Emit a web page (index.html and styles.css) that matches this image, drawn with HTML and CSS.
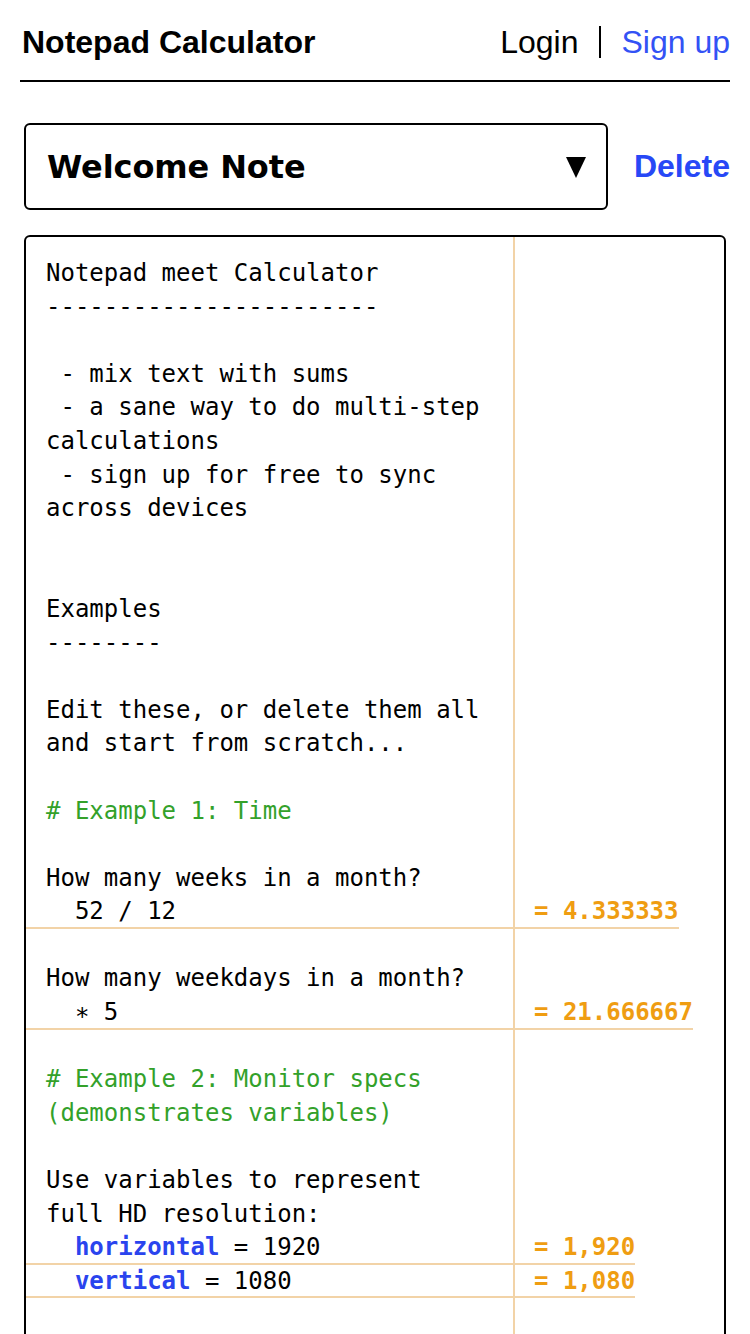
FILE: index.html
```html
<!DOCTYPE html>
<html lang="en">
<head>
<meta charset="utf-8">
<title>Notepad Calculator</title>
<link rel="stylesheet" href="styles.css">
</head>
<body>
<div class="page">
  <header class="topbar">
    <div class="brand">Notepad Calculator</div>
    <nav class="auth">
      <a class="auth-link login" href="#">Login</a>
      <span class="auth-sep"></span>
      <a class="auth-link signup" href="#">Sign up</a>
    </nav>
  </header>

  <div class="toolbar">
    <div class="note-select">
      <span class="note-title">Welcome Note</span>
      <svg class="caret" width="20" height="21" viewBox="0 0 20 21"><polygon points="0,0 20,0 10,21" fill="#000"/></svg>
    </div>
    <a class="delete" href="#">Delete</a>
  </div>

  <div class="editor">
    <div class="row"><div class="src">Notepad meet Calculator</div><div class="res"></div></div>
    <div class="row"><div class="src">-----------------------</div><div class="res"></div></div>
    <div class="row"><div class="src"> </div><div class="res"></div></div>
    <div class="row"><div class="src"> - mix text with sums</div><div class="res"></div></div>
    <div class="row"><div class="src"> - a sane way to do multi-step calculations</div><div class="res"></div></div>
    <div class="row"><div class="src"> - sign up for free to sync across devices</div><div class="res"></div></div>
    <div class="row"><div class="src"> </div><div class="res"></div></div>
    <div class="row"><div class="src"> </div><div class="res"></div></div>
    <div class="row"><div class="src">Examples</div><div class="res"></div></div>
    <div class="row"><div class="src">--------</div><div class="res"></div></div>
    <div class="row"><div class="src"> </div><div class="res"></div></div>
    <div class="row"><div class="src">Edit these, or delete them all and start from scratch...</div><div class="res"></div></div>
    <div class="row"><div class="src"> </div><div class="res"></div></div>
    <div class="row"><div class="src comment"># Example 1: Time</div><div class="res"></div></div>
    <div class="row"><div class="src"> </div><div class="res"></div></div>
    <div class="row"><div class="src">How many weeks in a month?</div><div class="res"></div></div>
    <div class="row calc"><div class="src">  52 / 12</div><div class="res"><span class="value">= 4.333333</span></div></div>
    <div class="row"><div class="src"> </div><div class="res"></div></div>
    <div class="row"><div class="src">How many weekdays in a month?</div><div class="res"></div></div>
    <div class="row calc"><div class="src">  ∗ 5</div><div class="res"><span class="value">= 21.666667</span></div></div>
    <div class="row"><div class="src"> </div><div class="res"></div></div>
    <div class="row"><div class="src comment"># Example 2: Monitor specs (demonstrates variables)</div><div class="res"></div></div>
    <div class="row"><div class="src"> </div><div class="res"></div></div>
    <div class="row"><div class="src">Use variables to represent full HD resolution:</div><div class="res"></div></div>
    <div class="row calc"><div class="src">  <span class="var">horizontal</span> = 1920</div><div class="res"><span class="value">= 1,920</span></div></div>
    <div class="row calc"><div class="src">  <span class="var">vertical</span> = 1080</div><div class="res"><span class="value">= 1,080</span></div></div>
    <div class="row"><div class="src"> </div><div class="res"></div></div>
    <div class="row"><div class="src"> </div><div class="res"></div></div>
    <div class="row"><div class="src"> </div><div class="res"></div></div>
  </div>
</div>
</body>
</html>
```

FILE: styles.css
```css
html, body {
  margin: 0;
  padding: 0;
  background: #fff;
}

.page {
  padding: 0 20px;
  font-family: "Liberation Sans", Arial, sans-serif;
  color: #000;
}

.topbar {
  display: flex;
  align-items: center;
  justify-content: space-between;
  height: 82px;
  padding-top: 4px;
  box-sizing: border-box;
  border-bottom: 2px solid #000;
}

.brand {
  font-size: 32px;
  font-weight: bold;
  padding-left: 2px;
}

.auth {
  display: flex;
  align-items: center;
  gap: 20px;
  font-size: 32px;
}

.auth-link {
  text-decoration: none;
}

.login {
  color: #000;
  margin-right: 1px;
}

.signup {
  color: #3352f5;
}

.auth-sep {
  display: block;
  width: 2px;
  height: 32px;
  background: #000;
}

.toolbar {
  display: flex;
  align-items: center;
  margin-top: 41px;
  padding-left: 4px;
}

.note-select {
  display: flex;
  align-items: center;
  justify-content: space-between;
  width: 584px;
  height: 87px;
  box-sizing: border-box;
  border: 2px solid #000;
  border-radius: 6px;
  padding: 0 20px 0 21px;
}

.note-title {
  font-family: "DejaVu Sans", sans-serif;
  font-size: 32px;
  font-weight: bold;
  letter-spacing: -0.1px;
}

.caret {
  display: block;
  margin-top: 1px;
}

.delete {
  margin-left: auto;
  font-size: 32px;
  font-weight: bold;
  color: #2748f6;
  text-decoration: none;
}

.editor {
  margin: 25px 4px 0 4px;
  border: 2px solid #000;
  border-radius: 6px;
  padding: 20px 0 0 0;
  font-family: "DejaVu Sans Mono", monospace;
  font-size: 24px;
  line-height: 33.6px;
  background: linear-gradient(to right, transparent 487px, #f2d3a7 487px, #f2d3a7 489px, transparent 489px);
}

.row {
  display: grid;
  grid-template-columns: 487px 1fr;
  column-gap: 2px;
}

.src {
  padding-left: 20px;
  padding-right: 24px;
  white-space: pre-wrap;
  min-height: 33.6px;
}

.calc .src {
  box-shadow: inset 0 -2px 0 #f2d3a7;
}

.res {
  display: flex;
}

.value {
  padding-left: 19px;
  font-weight: bold;
  color: #ef9d12;
  box-shadow: inset 0 -2px 0 #f2d3a7;
  white-space: pre;
}

.comment {
  color: #33a12a;
}

.var {
  font-weight: bold;
  color: #2a44ee;
}
```
